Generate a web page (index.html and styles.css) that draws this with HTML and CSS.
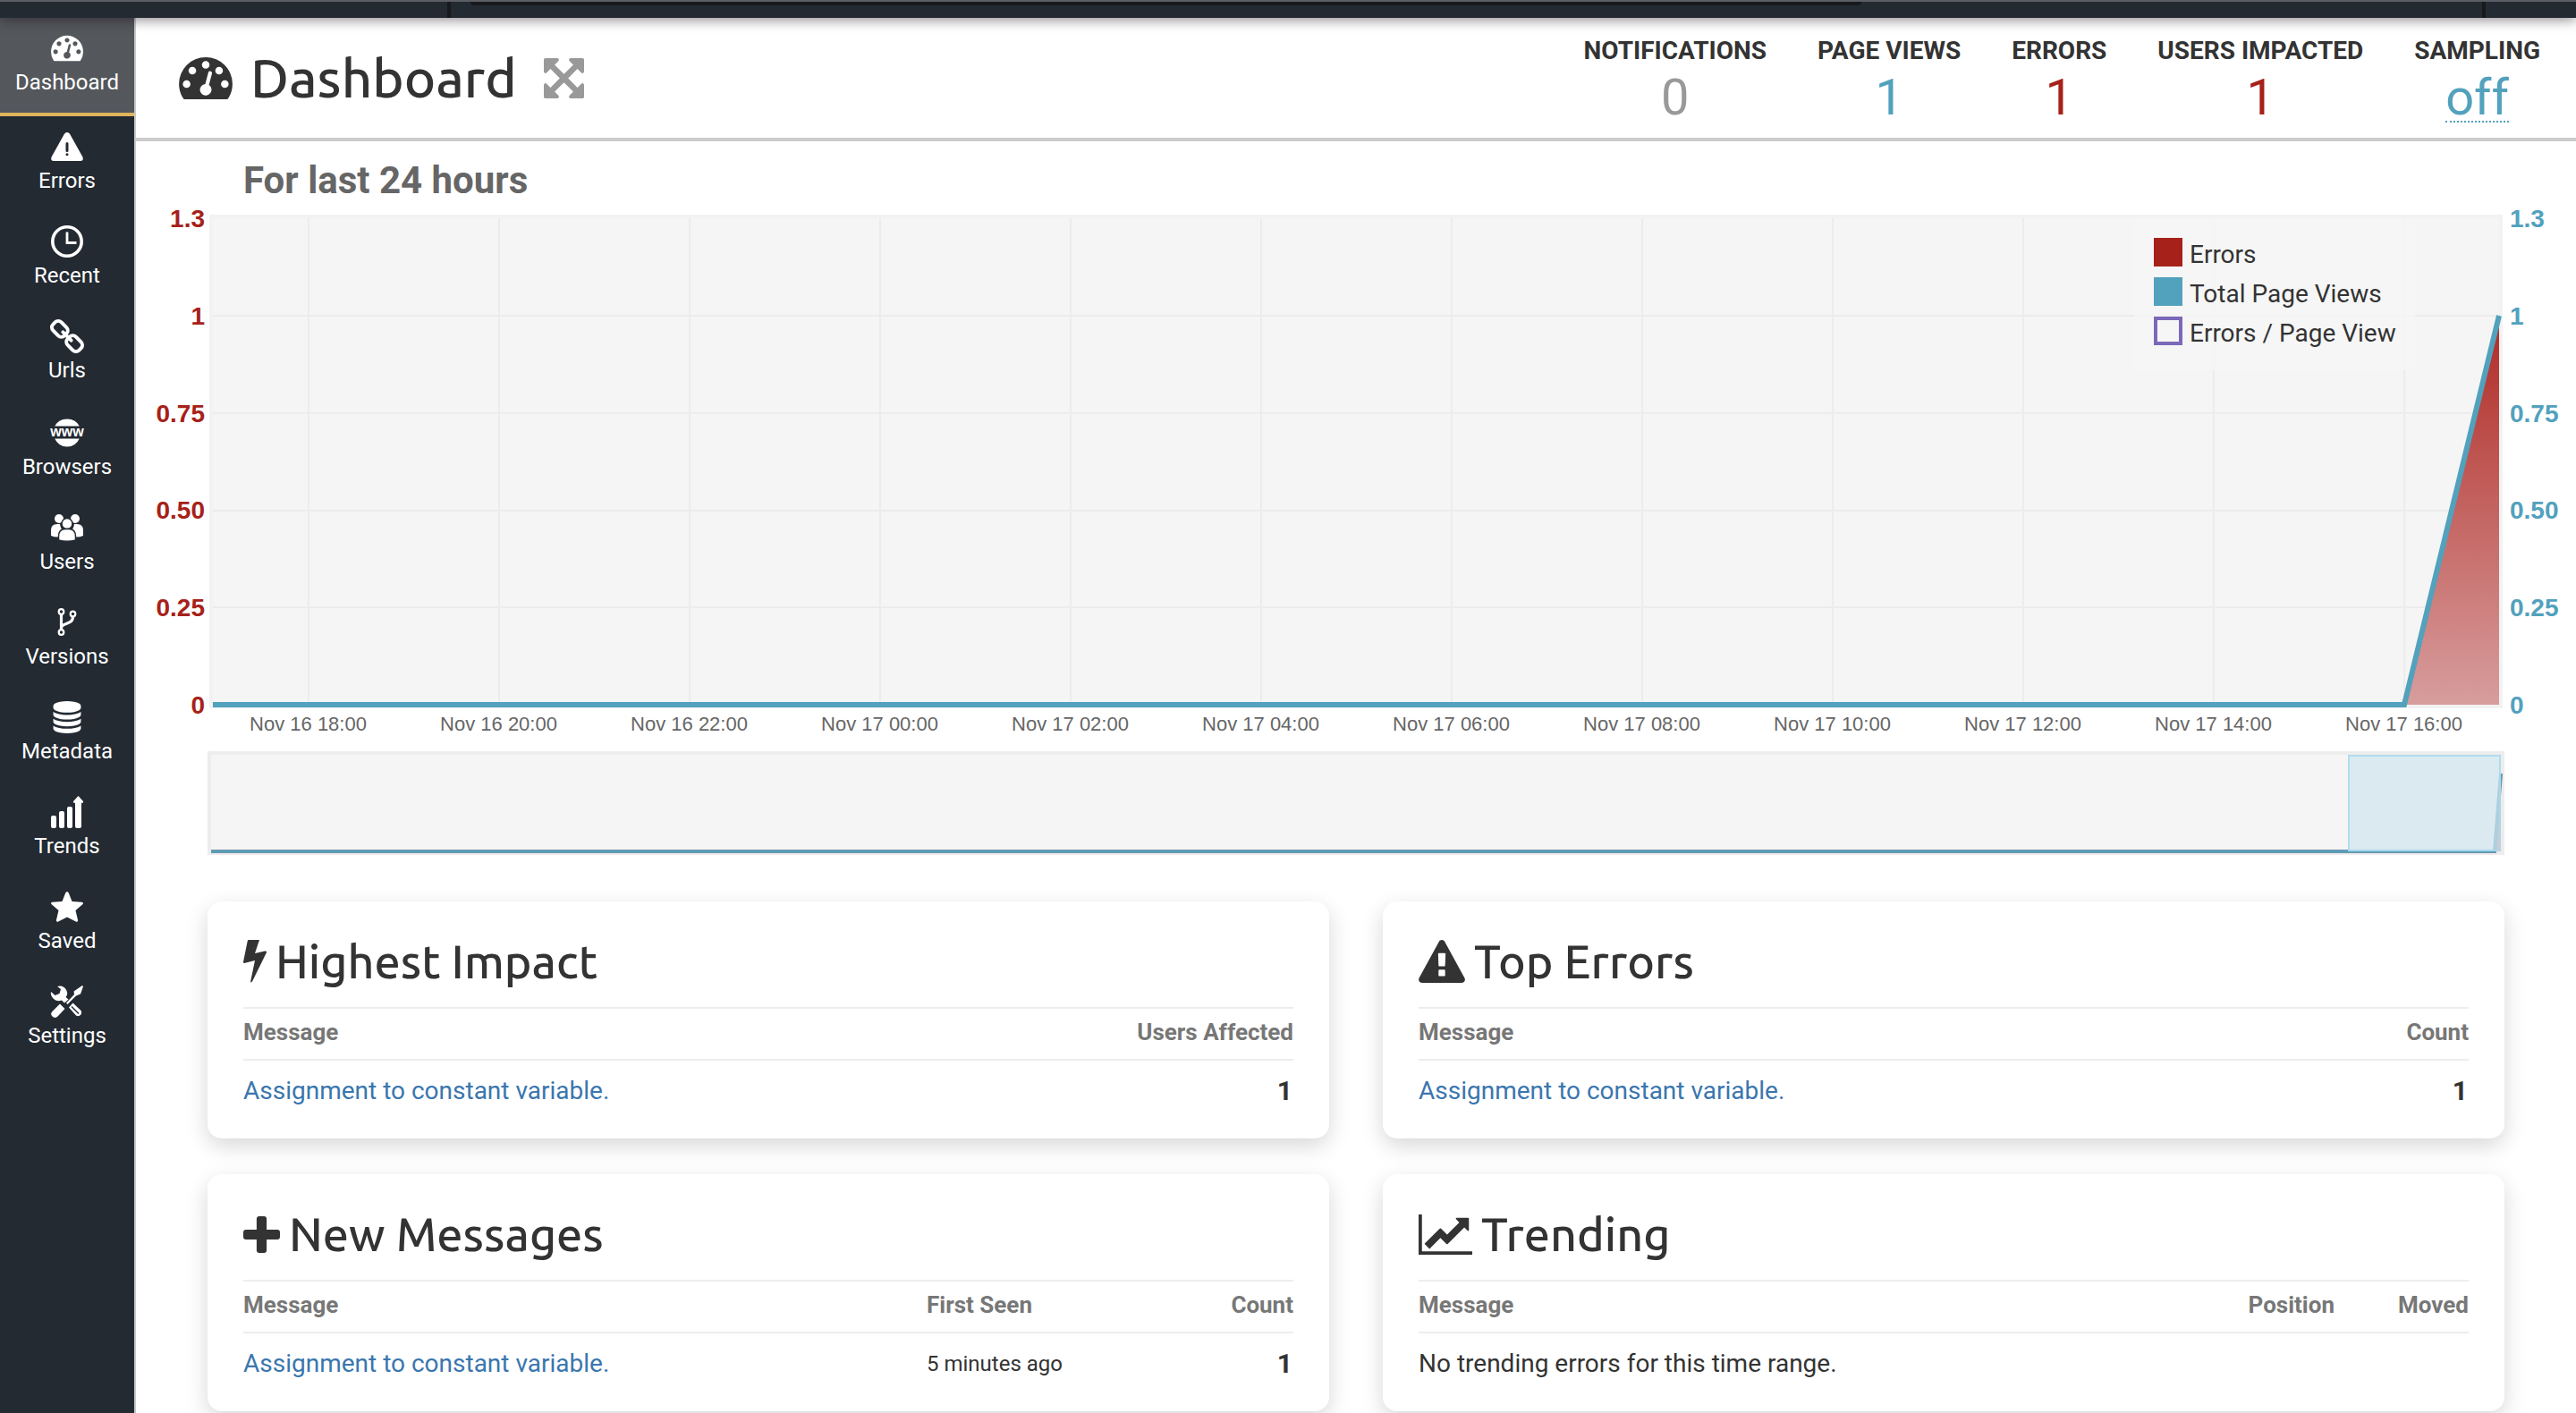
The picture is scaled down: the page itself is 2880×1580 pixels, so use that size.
FILE: index.html
```html
<!DOCTYPE html>
<html lang="en">
<head>
<meta charset="utf-8">
<title>Dashboard</title>
<link rel="stylesheet" href="styles.css">
</head>
<body>
<svg class="sprite" aria-hidden="true">
  <symbol id="gauge" viewBox="0 256 1792 1408"><path d="M384 1152q0-53-37.500-90.500t-90.500-37.500-90.500 37.500-37.500 90.500 37.500 90.500 90.500 37.500 90.500-37.500 37.500-90.500zm192-448q0-53-37.500-90.500t-90.500-37.500-90.500 37.500-37.500 90.500 37.500 90.500 90.500 37.500 90.500-37.500 37.500-90.500zm428 481l101-382q6-26-7.500-48.500t-38.500-29.500-48 6.500-30 39.500l-101 382q-60 5-107 43.500t-63 98.500q-20 77 20 146t117 89 146-20 89-117q16-60-6-117t-72-91zm660-33q0-53-37.500-90.500t-90.500-37.500-90.500 37.500-37.500 90.500 37.500 90.500 90.500 37.500 90.500-37.500 37.500-90.500zm-640-640q0-53-37.500-90.500t-90.500-37.500-90.500 37.500-37.500 90.500 37.500 90.500 90.500 37.500 90.500-37.500 37.500-90.500zm448 192q0-53-37.500-90.500t-90.500-37.500-90.500 37.500-37.500 90.500 37.500 90.500 90.500 37.500 90.500-37.500 37.500-90.500zm320 448q0 261-141 483-19 29-54 29h-1402q-35 0-54-29-141-221-141-483 0-182 71-348t191-286 286-191 348-71 348 71 286 191 191 286 71 348z"/></symbol>
</svg>

<div class="topbar">
  <div class="topbar-brand"></div>
  <div class="topbar-search"></div>
  <div class="topbar-user"></div>
</div>

<div class="layout">
  <nav class="sidebar">
    <a class="nav-item active" href="#dashboard">
      <svg class="nav-icon"><use href="#gauge"/></svg>Dashboard</a>
    <a class="nav-item" href="#errors">
      <svg class="nav-icon" viewBox="0 0 36 36"><path fill-rule="evenodd" d="M18 2q2 0 3.200 2L35.400 29.500q1.600 4.500-2.900 4.500H3.500q-4.500 0-2.900-4.500L14.800 4Q16 2 18 2zM16.500 14.500v8q0 1.500 1.500 1.500t1.500-1.500v-8Q19.500 13 18 13t-1.500 1.500zM18 25.300a1.500 1.500 0 1 0 .01 0z"/></svg>Errors</a>
    <a class="nav-item" href="#recent">
      <svg class="nav-icon line" viewBox="0 0 36 36"><circle cx="18" cy="18" r="16.200" stroke-width="3.600"/><path d="M18 7.500V19.500H28.500" stroke-width="2.800"/></svg>Recent</a>
    <a class="nav-item" href="#urls">
      <svg class="nav-icon line" viewBox="0 0 36 36" stroke-width="4"><g transform="rotate(45 18 18)"><rect x="-2.500" y="11.500" width="18" height="13" rx="5"/><rect x="20.500" y="11.500" width="18" height="13" rx="5"/><path d="M11.500 18H24.500" stroke-linecap="round"/></g></svg>Urls</a>
    <a class="nav-item" href="#browsers">
      <svg class="nav-icon tall" viewBox="0 0 36 38"><path d="M4.200 12.500Q8.500 4.500 18 4.500T31.800 12.500zM4.200 26.500H31.800Q27.500 35.500 18 35.500T4.200 26.500z"/><text class="www" x="18" y="24" text-anchor="middle">www</text></svg>Browsers</a>
    <a class="nav-item" href="#users">
      <svg class="nav-icon" viewBox="0 0 36 36"><circle cx="9" cy="8" r="5"/><circle cx="27" cy="8" r="5"/><path d="M0 27v-6q0-7 7-7h3q1 7 5 8-6 1-7 6.500Q3 28.500 0 27zM36 27v-6q0-7-7-7h-3q-1 7-5 8 6 1 7 6.500Q33 28.500 36 27z"/><circle class="user-front" cx="18" cy="13.500" r="6"/><path class="user-front" d="M8.500 32v-4q0-8.500 7.500-8.500h4q7.500 0 7.500 8.500v4q-9.500 2.500-19 0z"/></svg>Users</a>
    <a class="nav-item" href="#versions">
      <svg class="nav-icon line" viewBox="0 0 36 36"><circle cx="11.500" cy="6" r="2.800" stroke-width="2.200"/><circle cx="24.500" cy="8.500" r="2.800" stroke-width="2.200"/><circle cx="11.500" cy="29" r="2.800" stroke-width="2.200"/><path d="M11.500 9V26M24.500 11.500C24.500 21 12 18 11.500 24" stroke-width="3.200"/></svg>Versions</a>
    <a class="nav-item" href="#metadata">
      <svg class="nav-icon" viewBox="0 0 1792 1792"><path d="M896 768q237 0 443-43t325-127v170q0 69-103 128t-280 93.500-385 34.500-385-34.500-280-93.500-103-128v-170q119 84 325 127t443 43zm0 768q237 0 443-43t325-127v170q0 69-103 128t-280 93.500-385 34.500-385-34.500-280-93.500-103-128v-170q119 84 325 127t443 43zm0-384q237 0 443-43t325-127v170q0 69-103 128t-280 93.500-385 34.500-385-34.500-280-93.500-103-128v-170q119 84 325 127t443 43zm0-1152q208 0 385 34.500t280 93.500 103 128v128q0 69-103 128t-280 93.500-385 34.500-385-34.500-280-93.500-103-128v-128q0-69 103-128t280-93.500 385-34.500z"/></svg>Metadata</a>
    <a class="nav-item" href="#trends">
      <svg class="nav-icon" viewBox="0 0 36 36"><rect x="0" y="22" width="6" height="14" rx="2"/><rect x="9" y="17" width="6" height="19" rx="2"/><rect x="18" y="12" width="6" height="24" rx="2"/><path d="M30.500 0L36 6q.5 2-2 2v26q0 2-2 2h-3q-2 0-2-2V8q-2.500 0-2-2z"/></svg>Trends</a>
    <a class="nav-item" href="#saved">
      <svg class="nav-icon" viewBox="0 0 36 36"><path d="M18 1q1.200 0 1.800 1.500L23.500 12l11 .8q2.500.5.800 2.400L27.500 22l2.600 11q.2 2.500-2.200 1.600L18 29.500l-9.900 5.100Q5.700 35.500 5.900 33l2.600-11L.7 15.200Q-1 13.300 1.500 12.800l11-.8 3.700-9.500Q16.800 1 18 1z"/></svg>Saved</a>
    <a class="nav-item" href="#settings">
      <svg class="nav-icon" viewBox="0 0 36 36"><path d="M7 1q6-2 9.500 3t0 9l3 2.500-4.500 4-3-3Q6 18.500 2.500 14.500T0 7l4.500 4 5-2 1.500-5zM35 0l1 1-3 8.500-5 2L18.500 21l-1.500-1.500L26 10l-.5-3.500zM10 20.500L15.500 26 8 34q-3.500 3.500-6.500.5t.5-6z"/><path fill-rule="evenodd" d="M24.500 19.500l9 8.500q1.500 2 0 4.500-2.500 3-5.500 1l-8-9zm-1 3.500l-1 1 8 8 1-1z"/></svg>Settings</a>
  </nav>

  <main class="main">
    <header class="page-header">
      <h1 class="page-title"><svg class="title-icon"><use href="#gauge"/></svg>Dashboard</h1>
      <button class="expand" type="button" aria-label="Full screen"><svg viewBox="128 128 1536 1536"><path d="M1411 541l-355 355 355 355 144-144q29-31 70-14 39 17 39 59v448q0 26-19 45t-45 19h-448q-42 0-59-40-17-39 14-69l144-144-355-355-355 355 144 144q31 30 14 69-17 40-59 40h-448q-26 0-45-19t-19-45v-448q0-42 40-59 39-17 69 14l144 144 355-355-355-355-144 144q-19 19-45 19-12 0-24-5-40-17-40-59v-448q0-26 19-45t45-19h448q42 0 59 40 17 39-14 69l-144 144 355 355 355-355-144-144q-31-30-14-69 17-40 59-40h448q26 0 45 19t19 45v448q0 42-39 59-13 5-25 5-26 0-45-19z"/></svg></button>
      <dl class="stats">
        <div class="stat"><dt>NOTIFICATIONS</dt><dd class="muted">0</dd></div>
        <div class="stat"><dt>PAGE VIEWS</dt><dd class="blue">1</dd></div>
        <div class="stat"><dt>ERRORS</dt><dd class="red">1</dd></div>
        <div class="stat"><dt>USERS IMPACTED</dt><dd class="red">1</dd></div>
        <div class="stat"><dt>SAMPLING</dt><dd><a class="sampling" href="#sampling">off</a></dd></div>
      </dl>
    </header>

    <section class="activity">
      <h2 class="range-title">For last 24 hours</h2>
      <div class="chart">
        <div class="y-axis left"><span>1.3</span><span>1</span><span>0.75</span><span>0.50</span><span>0.25</span><span>0</span></div>
        <div class="plot">
          <svg class="plot-svg" viewBox="0 0 2556 544" preserveAspectRatio="none">
            <defs><linearGradient id="fade" x1="0" y1="0" x2="0" y2="1"><stop offset="0" stop-color="#b02b25"/><stop offset="1" stop-color="#d79d9d"/></linearGradient></defs>
            <path class="grid-lines" d="M0 109H2556M0 218H2556M0 327H2556M0 435H2556M107 0V544M320 0V544M533 0V544M746 0V544M959 0V544M1172 0V544M1385 0V544M1598 0V544M1811 0V544M2024 0V544M2237 0V544M2450 0V544"/>
            <path fill="url(#fade)" d="M2450 544L2556 109V544z"/>
            <path class="views-line" d="M0 544H2450L2556 109"/>
          </svg>
          <ul class="legend">
            <li><i class="swatch errors"></i>Errors</li>
            <li><i class="swatch views"></i>Total Page Views</li>
            <li><i class="swatch ratio"></i>Errors / Page View</li>
          </ul>
        </div>
        <div class="y-axis right"><span>1.3</span><span>1</span><span>0.75</span><span>0.50</span><span>0.25</span><span>0</span></div>
        <div class="x-axis">
          <span>Nov 16 18:00</span><span>Nov 16 20:00</span><span>Nov 16 22:00</span><span>Nov 17 00:00</span><span>Nov 17 02:00</span><span>Nov 17 04:00</span><span>Nov 17 06:00</span><span>Nov 17 08:00</span><span>Nov 17 10:00</span><span>Nov 17 12:00</span><span>Nov 17 14:00</span><span>Nov 17 16:00</span>
        </div>
      </div>
      <div class="overview">
        <svg class="plot-svg" viewBox="0 0 2560 108" preserveAspectRatio="none">
          <path fill="#d08a88" d="M2553 108L2560 30V108z"/>
          <path class="overview-shadow" d="M0 108H2553L2560 21"/>
          <path class="overview-line" d="M0 108H2553L2560 21"/>
        </svg>
        <div class="selection"></div>
      </div>
    </section>

    <section class="cards">
      <article class="card">
        <h2 class="card-title"><svg class="icon-bolt" viewBox="0 0 26 48"><path d="M6 0H18L13 15 24 12.500Q26.500 12 26 14L10 46.500Q8 49 8.300 45.500L13 23 1 26Q0 26 0 24.500L4.800 1Q5 0 6 0z"/></svg>Highest Impact</h2>
        <table>
          <thead><tr><th>Message</th><th class="num">Users Affected</th></tr></thead>
          <tbody><tr><td><a href="#e1">Assignment to constant variable.</a></td><td class="num count">1</td></tr></tbody>
        </table>
      </article>
      <article class="card">
        <h2 class="card-title"><svg class="icon-warning" viewBox="0 0 1792 1664"><path d="M1024 1375v-190q0-14-9.500-23.500t-22.500-9.500h-192q-13 0-22.500 9.500t-9.500 23.500v190q0 14 9.500 23.500t22.500 9.500h192q13 0 22.500-9.500t9.500-23.500zm-2-374l18-459q0-12-10-19-13-11-24-11h-220q-11 0-24 11-10 7-10 21l17 457q0 10 10 16.500t24 6.500h185q14 0 23.500-6.500t10.500-16.500zm-14-934l768 1408q35 63-2 126-17 29-46.500 46t-63.500 17h-1536q-34 0-63.500-17t-46.500-46q-37-63-2-126l768-1408q17-31 47-49t65-18 65 18 47 49z"/></svg>Top Errors</h2>
        <table>
          <thead><tr><th>Message</th><th class="num">Count</th></tr></thead>
          <tbody><tr><td><a href="#e1">Assignment to constant variable.</a></td><td class="num count">1</td></tr></tbody>
        </table>
      </article>
      <article class="card">
        <h2 class="card-title"><svg class="icon-plus" viewBox="192 128 1408 1408"><path d="M1600 736v192q0 40-28 68t-68 28h-416v416q0 40-28 68t-68 28h-192q-40 0-68-28t-28-68v-416h-416q-40 0-68-28t-28-68v-192q0-40 28-68t68-28h416v-416q0-40 28-68t68-28h192q40 0 68 28t28 68v416h416q40 0 68 28t28 68z"/></svg>New Messages</h2>
        <table>
          <thead><tr><th>Message</th><th class="col-seen">First Seen</th><th class="num col-count">Count</th></tr></thead>
          <tbody><tr><td><a href="#e1">Assignment to constant variable.</a></td><td class="ago">5 minutes ago</td><td class="num count">1</td></tr></tbody>
        </table>
      </article>
      <article class="card">
        <h2 class="card-title"><svg class="icon-trend" viewBox="0 128 2048 1536"><path d="M2048 1536v128h-2048v-1536h128v1408h1920zm-128-1248v435q0 21-19.500 29.500t-35.500-7.500l-121-121-633 633q-10 10-23 10t-23-10l-233-233-416 416-192-192 585-585q10-10 23-10t23 10l233 233 464-464-121-121q-16-16-7.500-35.500t29.500-19.500h435q14 0 23 9t9 23z"/></svg>Trending</h2>
        <table>
          <thead><tr><th>Message</th><th class="num">Position</th><th class="num col-moved">Moved</th></tr></thead>
          <tbody><tr><td colspan="3">No trending errors for this time range.</td></tr></tbody>
        </table>
      </article>
    </section>
  </main>
</div>
</body>
</html>
```
FILE: styles.css
```css
:root {
  --dark: #232a32;
  --text: #333;
  --red: #a62119;
  --blue: #52a1bd;
  --rule: #ededed;
}

* { box-sizing: border-box; }

body {
  margin: 0;
  min-height: 100vh;
  display: flex;
  flex-direction: column;
  background: #fff;
  color: var(--text);
  font-family: Roboto, "Liberation Sans", sans-serif;
  font-size: 28px;
}

h1, h2, dl, dd, ul { margin: 0; padding: 0; }

svg { display: block; fill: currentColor; flex: none; }

.sprite { position: absolute; width: 0; height: 0; }

/* Bar across the top of the window */
.topbar {
  display: flex;
  height: 20px;
  background: var(--dark);
  border-top: 2px solid #5b5f65;
  box-shadow: 0 2px 14px rgba(20, 10, 20, .5);
  position: relative;
  z-index: 2;
}

.topbar-brand { width: 504px; border-right: 4px solid #17191c; }

.topbar-search {
  width: 54%;
  height: 4px;
  margin-left: 22px;
  border-radius: 0 0 8px 8px;
  background: #17191c;
}

.topbar-user { width: 105px; margin-left: auto; border-left: 4px solid #17191c; }

.layout { display: flex; flex: 1; }

/* Side navigation */
.sidebar {
  width: 152px;
  flex: none;
  background: var(--dark);
  border-right: 2px solid #c8c8c8;
}

.nav-item {
  display: flex;
  flex-direction: column;
  align-items: center;
  gap: 6px;
  padding: 16px 0 20px;
  color: #fff;
  font-size: 24px;
  line-height: 28px;
  text-decoration: none;
}

.nav-item.active { background: #54575c; border-bottom: 4px solid #dfb45c; }

.nav-icon { width: 36px; height: 36px; overflow: visible; }
.nav-icon.tall { height: 38px; }
.nav-icon.line { fill: none; stroke: currentColor; }
.user-front { stroke: var(--dark); stroke-width: 1.5; }

.www { font: bold 16px "Liberation Sans", sans-serif; }

.main { flex: 1; min-width: 0; }

/* Page header */
.page-header {
  display: flex;
  align-items: center;
  height: 138px;
  padding: 0 40px 0 48px;
  border-bottom: 4px solid #ccc;
}

.page-title {
  display: flex;
  align-items: center;
  gap: 20px;
  font: 500 60px/72px Ubuntu, "Noto Sans", sans-serif;
}

.title-icon { width: 60px; height: 47px; }

.expand {
  margin-left: 30px;
  padding: 0;
  border: 0;
  background: none;
  color: #999;
}

.expand svg { width: 45px; height: 45px; }

.stats {
  display: flex;
  gap: 57px;
  align-self: flex-start;
  margin-left: auto;
  padding-top: 21px;
  text-align: center;
}

.stat dt { font-weight: 700; line-height: 32px; }
.stat dd { margin-top: 10px; font-size: 56px; line-height: 52px; }
.muted { color: #999; }
.blue { color: var(--blue); }
.red { color: var(--red); }

.sampling {
  display: inline-block;
  border-bottom: 2px dotted var(--blue);
  color: var(--blue);
  text-decoration: none;
}

/* Activity chart */
.range-title {
  padding: 20px 0 14px 120px;
  color: #666;
  font-size: 42px;
  line-height: 48px;
}

.chart {
  display: grid;
  grid-template-columns: 82px minmax(0, 1fr) 82px;
}

.plot {
  position: relative;
  height: 552px;
  border: 4px solid #f2f2f2;
  background: #f5f5f5;
}

.plot-svg { width: 100%; height: 100%; overflow: visible; fill: none; }
.plot-svg path { vector-effect: non-scaling-stroke; }
.grid-lines { stroke: #ececec; stroke-width: 2; }
.views-line { stroke: var(--blue); stroke-width: 6; }

.y-axis {
  display: flex;
  flex-direction: column;
  justify-content: space-between;
  margin: -11px 0 -13px;
  font: bold 28px/32px "Liberation Sans", sans-serif;
}

.y-axis.left { align-items: flex-end; padding-right: 5px; color: var(--red); }
.y-axis.right { padding-left: 8px; color: var(--blue); }

.x-axis {
  grid-column: 2;
  display: grid;
  grid-template-columns: repeat(12, minmax(0, 1fr));
  margin-top: 5px;
  padding: 0 4px;
  color: #666;
  font: 22px/26px "Liberation Sans", sans-serif;
  text-align: center;
}

.legend {
  position: absolute;
  top: 0;
  right: 94px;
  width: 314px;
  padding: 22px 22px 22px;
  display: grid;
  gap: 6px;
  background: rgba(246, 246, 246, .85);
  list-style: none;
  line-height: 38px;
}

.legend li { display: flex; gap: 8px; white-space: nowrap; }
.swatch { width: 32px; height: 32px; }
.swatch.errors { background: var(--red); }
.swatch.views { background: var(--blue); }
.swatch.ratio { border: 4px solid #7b68b8; }

.overview {
  position: relative;
  height: 116px;
  margin: 17px 80px 0;
  border: 4px solid var(--rule);
  background: #f5f5f5;
}

.overview-shadow { stroke: #8c8492; stroke-width: 4; }
.overview-line { stroke: var(--blue); stroke-width: 3; }

.selection {
  position: absolute;
  top: 0;
  right: 0;
  width: 171px;
  height: 108px;
  border: 2px solid rgba(165, 216, 238, .8);
  background: rgba(208, 230, 240, .7);
}

/* Cards */
.cards {
  display: grid;
  grid-template-columns: repeat(2, minmax(0, 1fr));
  gap: 40px 60px;
  padding: 52px 80px 0;
}

.card {
  padding: 37px 40px 19px;
  border-radius: 16px;
  background: #fff;
  box-shadow: 0 8px 24px rgba(0, 0, 0, .16);
}

.card-title {
  display: flex;
  align-items: center;
  gap: 10px;
  margin-bottom: 21px;
  font: 500 52px/60px Ubuntu, "Noto Sans", sans-serif;
}

.icon-bolt { width: 26px; height: 48px; }
.icon-warning { width: 52px; height: 48px; }
.icon-plus { width: 41px; height: 41px; }
.icon-trend { width: 60px; height: 45px; }

table { width: 100%; border-spacing: 0; }

th {
  padding: 8px 0 11px;
  border: solid var(--rule);
  border-width: 2px 0;
  color: #777;
  font-size: 26px;
  line-height: 37px;
  text-align: left;
}

td { padding: 14px 0; line-height: 40px; }
td a { color: #3a76ae; text-decoration: none; }
.num { text-align: right; }
.count { padding-right: 1px; font-size: 30px; font-weight: 700; }
.ago { font-size: 24px; }
.col-seen { width: 310px; }
.col-count { width: 100px; }
.col-moved { width: 150px; }
```
